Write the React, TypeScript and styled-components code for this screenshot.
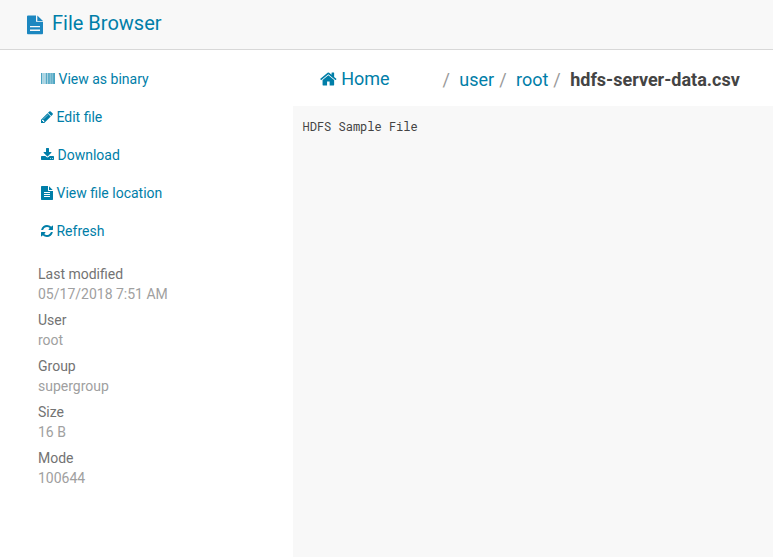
import React from "react";
import styled, { createGlobalStyle } from "styled-components";

const link = "#007ea8";

const Global = createGlobalStyle`
  * { box-sizing: border-box; }
  html, body { margin: 0; padding: 0; height: 557px; overflow: hidden; background: #fff; }
  body { font-family: Roboto, sans-serif; font-size: 14px; line-height: 20px; color: #444; }
`;
const Header = styled.header`
  display: flex; height: 50px; padding: 13px 27px 0; gap: 9px;
  background: #f8f8f8; border-bottom: 1px solid #d8d8d8;
  color: ${link}; font-size: 20px;
`;
const AppIcon = styled.svg`width: 16px; height: 20px; margin-top: 2px; flex: none;`;
const Main = styled.main`display: grid; grid-template-columns: 293px 480px; height: 507px;`;
const Side = styled.aside`padding: 10px 38px 0;`;
const Nav = styled.nav`display: flex; flex-direction: column;`;
const Action = styled.a`
  display: flex; height: 38px; align-items: center; gap: 3.47px; padding-left: 3px; color: ${link};
`;
const Glyph = styled.svg<{ $size: number; $units: number }>`
  flex: none; display: block; fill: currentColor;
  height: ${p => p.$size}px; width: ${p => (p.$size * p.$units) / 1792}px;
`;
const Info = styled.dl`margin: 14px 0 0;`;
const Label = styled.dt`color: #737373;`;
const Value = styled.dd`margin: 0 0 6px; color: #a0a0a0;`;
const Content = styled.section`display: flex; flex-direction: column;`;
const Crumbs = styled.div`display: flex; height: 56px; padding: 19px 0 0 27px; font-size: 18px;`;
const Home = styled.a`
  display: flex; align-items: center; height: 20px; width: 122.4px; gap: 4.5px; color: ${link};
  ${Glyph} { margin-bottom: 1px; }
`;
const Trail = styled.div`display: flex; padding-top: 1px;`;
const Crumb = styled.a`color: ${link};`;
const Slash = styled.span<{ $before?: number; $after: number }>`
  color: #999; margin-left: ${p => p.$before || 0}px; margin-right: ${p => p.$after}px;
`;
const Current = styled.strong`color: #444; font-weight: 700;`;
const Pre = styled.pre`margin: 0; flex: 1; background: #f8f8f8; padding: 11px 9.5px; color: #444; font: 12px/18px "Roboto Mono", monospace;`;

const paths = {
  home: "M1472 992v480q0 26-19 45t-45 19h-384v-384h-256v384h-384q-26 0-45-19t-19-45v-480q0-1 .5-3t.5-3l575-474 575 474q1 2 1 6zm223-69l-62 74q-8 9-21 11h-3q-13 0-21-7l-692-577-692 577q-12 8-24 7-13-2-21-11l-62-74q-8-10-7-23.5t11-21.5l719-599q32-26 76-26t76 26l244 204v-195q0-14 9-23t23-9h192q14 0 23 9t9 23v408l219 182q10 8 11 21.5t-7 23.5z",
  barcode: "M0 128h90v1408h-90zM160 128h40v1408h-40zM290 128h44v1408h-44zM400 128h40v1408h-40zM540 128h45v1408h-45zM650 128h84v1408h-84zM800 128h44v1408h-44zM900 128h80v1408h-80zM1030 128h76v1408h-76zM1170 128h60v1408h-60zM1290 128h76v1408h-76zM1420 128h64v1408h-64zM1550 128h84v1408h-84zM1680 128h90v1408h-90z",
  pencil: "M491 1536l91-91-235-235-91 91v107h128v128h107zm523-928q0-22-22-22-10 0-17 7l-542 542q-7 7-7 17 0 22 22 22 10 0 17-7l542-542q7-7 7-17zm-54-192l416 416-832 832h-416v-416zm683 96q0 53-37 90l-166 166-416-416 166-165q36-38 90-38 53 0 91 38l235 234q37 39 37 91z",
  download: "M1344 1344q0-26-19-45t-45-19-45 19-19 45 19 45 45 19 45-19 19-45zm256 0q0-26-19-45t-45-19-45 19-19 45 19 45 45 19 45-19 19-45zm128-224v320q0 40-28 68t-68 28h-1472q-40 0-68-28t-28-68v-320q0-40 28-68t68-28h465l135 136q58 56 136 56t136-56l136-136h464q40 0 68 28t28 68zm-325-569q17 41-14 70l-448 448q-18 19-45 19t-45-19l-448-448q-31-29-14-70 17-39 59-39h256v-448q0-26 19-45t45-19h256q26 0 45 19t19 45v448h256q42 0 59 39z",
  file: "M1596 476q14 14 28 36h-472v-472q22 14 36 28zm-476 164h544v1056q0 40-28 68t-68 28h-1344q-40 0-68-28t-28-68v-1600q0-40 28-68t68-28h800v544q0 40 28 68t68 28zm160 736v-64q0-14-9-23t-23-9h-704q-14 0-23 9t-9 23v64q0 14 9 23t23 9h704q14 0 23-9t9-23zm0-256v-64q0-14-9-23t-23-9h-704q-14 0-23 9t-9 23v64q0 14 9 23t23 9h704q14 0 23-9t9-23zm0-256v-64q0-14-9-23t-23-9h-704q-14 0-23 9t-9 23v64q0 14 9 23t23 9h704q14 0 23-9t9-23z",
  refresh: "M1639 1056q0 5-1 7-64 268-268 434.5t-478 166.5q-146 0-282.5-55t-243.5-157l-129 129q-19 19-45 19t-45-19-19-45v-448q0-26 19-45t45-19h448q26 0 45 19t19 45-19 45l-137 137q71 66 161 102t187 36q134 0 250-65t186-179q11-17 53-117 8-23 30-23h192q13 0 22.5 9.5t9.5 22.5zm25-800v448q0 26-19 45t-45 19h-448q-26 0-45-19t-19-45 19-45l138-138q-148-137-349-137-134 0-250 65t-186 179q-11 17-53 117-8 23-30 23h-199q-13 0-22.5-9.5t-9.5-22.5v-7q65-268 270-434.5t480-166.5q146 0 284 55.5t245 156.5l130-129q19-19 45-19t45 19 19 45z",
};

function Icon({ name, units, size = 14 }: { name: keyof typeof paths; units: number; size?: number }) {
  return (
    <Glyph $size={size} $units={units} viewBox={`${(1792 - units) / 2} 0 ${units} 1792`} aria-hidden>
      <path d={paths[name]} />
    </Glyph>
  );
}

const actions: { icon: keyof typeof paths; units: number; label: string }[] = [
  { icon: "barcode", units: 1792, label: "View as binary" },
  { icon: "pencil", units: 1536, label: "Edit file" },
  { icon: "download", units: 1664, label: "Download" },
  { icon: "file", units: 1536, label: "View file location" },
  { icon: "refresh", units: 1536, label: "Refresh" },
];

const details = [
  ["Last modified", "05/17/2018 7:51 AM"],
  ["User", "root"],
  ["Group", "supergroup"],
  ["Size", "16 B"],
  ["Mode", "100644"],
];

export default function App() {
  return (
    <>
      <Global />
      <Header>
        <AppIcon viewBox="0 0 16 20" aria-hidden>
          <path fill="#1c87c0" d="M1 .5h8v6.2h7V18.3q0 .9-.9.9H.9q-.9 0-.9-.9V1.4Q0 .5 1 .5z" />
          <path fill="#1c87c0" d="M10.3.6L16 6H10.3z" />
          <path fill="#f8f8f8" d="M3 11h10v1.3H3zM3 14.6h10v1.3H3z" />
        </AppIcon>
        <span>File Browser</span>
      </Header>
      <Main>
        <Side>
          <Nav>
            {actions.map(a => (
              <Action key={a.label}>
                <Icon name={a.icon} units={a.units} />
                <span>{a.label}</span>
              </Action>
            ))}
          </Nav>
          <Info>
            {details.map(([label, value]) => (
              <React.Fragment key={label}>
                <Label>{label}</Label>
                <Value>{value}</Value>
              </React.Fragment>
            ))}
          </Info>
        </Side>
        <Content>
          <Crumbs>
            <Home>
              <Icon name="home" units={1664} size={18} />
              <span>Home</span>
            </Home>
            <Trail>
              <Slash $after={9.5}>/</Slash>
              <Crumb>user</Crumb>
              <Slash $before={5} $after={9.4}>/</Slash>
              <Crumb>root</Crumb>
              <Slash $before={5} $after={9.4}>/</Slash>
              <Current>hdfs-server-data.csv</Current>
            </Trail>
          </Crumbs>
          <Pre>HDFS Sample File</Pre>
        </Content>
      </Main>
    </>
  );
}
